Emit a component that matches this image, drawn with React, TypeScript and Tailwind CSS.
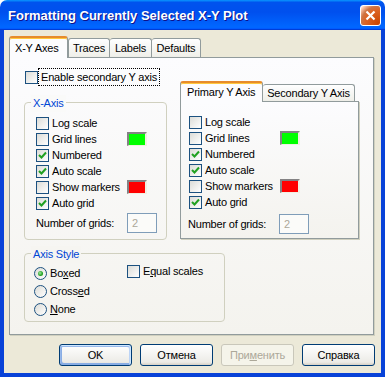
import type React from "react";

const CheckBox: React.FC<{ checked?: boolean }> = ({ checked }) => (
  <span className="flex h-[13px] w-[13px] shrink-0 items-center justify-center border border-[#1c5180] bg-[linear-gradient(135deg,#dcdcd7,#ffffff)]">
    {checked && (
      <svg width="9" height="9" viewBox="0 0 9 9">
        <polyline
          points="1,4 3.5,6.5 8,1.5"
          fill="none"
          stroke="#21a121"
          strokeWidth="2"
        />
      </svg>
    )}
  </span>
);

const Radio: React.FC<{ checked?: boolean }> = ({ checked }) => (
  <span className="flex h-[13px] w-[13px] shrink-0 items-center justify-center rounded-full border border-[#1c5180] bg-[linear-gradient(135deg,#dcdcd7,#ffffff)]">
    {checked && (
      <span className="h-[5px] w-[5px] rounded-full bg-[radial-gradient(circle_at_40%_40%,#a0e8a0,#21a121_60%,#1a8a1a)]" />
    )}
  </span>
);

const Swatch: React.FC<{ color: string }> = ({ color }) => (
  <span
    className={`h-[14px] w-[20px] border-t-2 border-l-2 border-b border-r-2 border-t-[#848284] border-l-[#848284] border-b-[#f1efe2] border-r-[#f1efe2] ${color}`}
  />
);

const OptionRow: React.FC<{
  label: string;
  checked?: boolean;
  swatch?: string;
}> = ({ label, checked, swatch }) => (
  <div className="flex h-[16px] items-center">
    <div className="flex w-[91px] items-center">
      <CheckBox checked={checked} />
      <span className="ml-[3px] whitespace-nowrap">{label}</span>
    </div>
    {swatch && <Swatch color={swatch} />}
  </div>
);

const AxisOptions: React.FC<{ gridsTop: string }> = ({ gridsTop }) => (
  <>
    <OptionRow label="Log scale" />
    <OptionRow label="Grid lines" swatch="bg-[#00ff00]" />
    <OptionRow label="Numbered" checked />
    <OptionRow label="Auto scale" checked />
    <OptionRow label="Show markers" swatch="bg-[#ff0000]" />
    <OptionRow label="Auto grid" checked />
    <div className={`flex items-center ${gridsTop}`}>
      <span className="w-[91px] whitespace-nowrap">Number of grids:</span>
      <div className="flex h-[20px] w-[30px] items-center border border-[#7f9db9] bg-[#fbfbf9] pl-[4px] text-[#aca899]">
        2
      </div>
    </div>
  </>
);

const Button: React.FC<{
  children: React.ReactNode;
  primary?: boolean;
  disabled?: boolean;
}> = ({ children, primary, disabled }) => (
  <button
    className={`flex h-[22px] w-[73px] items-center justify-center rounded-[3px] border ${
      disabled
        ? "border-[#c9c7ba] bg-[#f5f4ea] text-[#aca899]"
        : "border-[#003c74] bg-[linear-gradient(180deg,#ffffff,#ecebe6_86%,#d6d0c5)] text-black"
    } ${
      primary
        ? "shadow-[inset_-1px_1px_#cee7ff,inset_1px_2px_#98b8ea,inset_-2px_2px_#bcd4f6,inset_1px_-1px_#89ade4,inset_2px_-2px_#89ade4]"
        : ""
    }`}
  >
    {children}
  </button>
);

export default function App() {
  return (
    <div className="flex h-[377px] w-[385px] flex-col font-['Liberation_Sans',Arial,sans-serif] text-[11px] tracking-[-0.2px] text-black">
      {/* Title bar */}
      <div className="flex h-[30px] shrink-0 items-center justify-between rounded-t-[7px] bg-[linear-gradient(180deg,#0997ff,#0053ee_8%,#0050ee_40%,#0066ff_88%,#0066ff_93%,#005bff_95%,#003dd7_96%,#003dd7)] pl-[8px] pr-[4px]">
        <span className="pt-[2px] text-[13px] font-bold tracking-normal text-white [text-shadow:1px_1px_#0f1089]">
          Formatting Currently Selected X-Y Plot
        </span>
        <div className="mt-[1px] flex h-[21px] w-[21px] items-center justify-center rounded-[3px] border border-white bg-[radial-gradient(circle_at_90%_90%,#cc4600_0,#dc6527_55%,#cd7546_70%,#ffccb2_90%,#ffffff_100%)]">
          <svg width="11" height="11" viewBox="0 0 11 11">
            <path
              d="M1.5 1.5 L9.5 9.5 M9.5 1.5 L1.5 9.5"
              stroke="white"
              strokeWidth="2.2"
            />
          </svg>
        </div>
      </div>

      {/* Body */}
      <div className="flex flex-1 flex-col border-x-4 border-b-4 border-[#0842d8] bg-[#ece9d8]">
        {/* Main tabs */}
        <div className="flex h-[27px] items-end pl-[5px]">
          <div className="relative z-10 -mb-px flex h-[22px] w-[59px] items-center rounded-t-[3px] border-x border-t-2 border-x-[#919b9c] border-t-[#e68b2c] bg-[#fcfcfe] pl-[5px] shadow-[inset_0_1px_#ffc83c]">
            X-Y Axes
          </div>
          <div className="flex h-[19px] w-[42px] items-center justify-center rounded-t-[3px] border-x border-t border-[#919b9c] bg-[linear-gradient(180deg,#ffffff,#fafaf9_26%,#f0f0ea_95%,#ecebe5)]">
            Traces
          </div>
          <div className="flex h-[19px] w-[42px] items-center justify-center rounded-t-[3px] border-r border-t border-[#919b9c] bg-[linear-gradient(180deg,#ffffff,#fafaf9_26%,#f0f0ea_95%,#ecebe5)]">
            Labels
          </div>
          <div className="flex h-[19px] w-[49px] items-center justify-center rounded-t-[3px] border-r border-t border-[#919b9c] bg-[linear-gradient(180deg,#ffffff,#fafaf9_26%,#f0f0ea_95%,#ecebe5)]">
            Defaults
          </div>
        </div>

        {/* Main tab panel */}
        <div className="ml-[5px] mr-[7px] h-[278px] border border-[#919b9c] bg-[linear-gradient(180deg,#fcfcfe,#f4f3ee)] pl-[14px] shadow-[1px_1px_#d0d0bf]">
          <div className="flex items-start">
            {/* Left column */}
            <div className="flex w-[143px] flex-col">
              <div className="ml-[1px] mt-[11px] flex h-[16px] items-center">
                <CheckBox />
                <span className="ml-[1px] whitespace-nowrap px-[2px] outline-1 outline-dotted outline-black">
                  Enable secondary Y axis
                </span>
              </div>

              {/* X-Axis group */}
              <div className="relative mt-[17px] h-[138px] rounded-[4px] border border-[#d0d0bf] pl-[11px] pt-[12px]">
                <span className="absolute -top-[8px] left-[6px] bg-[#fafaf9] px-[2px] text-[#0046d5]">
                  X-Axis
                </span>
                <AxisOptions gridsTop="mt-[2px]" />
              </div>
            </div>

            {/* Right column: Y axis tabs */}
            <div className="ml-[13px] mt-[23px] flex w-[179px] flex-col">
              <div className="flex h-[20px] items-end">
                <div className="relative z-10 -mb-px flex h-[21px] w-[83px] items-center rounded-t-[3px] border-x border-t-2 border-x-[#919b9c] border-t-[#e68b2c] bg-[#fcfcfe] pl-[6px] shadow-[inset_0_1px_#ffc83c]">
                  Primary Y Axis
                </div>
                <div className="flex h-[17px] w-[92px] items-center justify-center rounded-t-[3px] border-r border-t border-[#919b9c] bg-[linear-gradient(180deg,#ffffff,#fafaf9_26%,#f0f0ea_95%,#ecebe5)]">
                  Secondary Y Axis
                </div>
              </div>
              <div className="h-[138px] border border-[#919b9c] bg-[linear-gradient(180deg,#fcfcfe,#f4f3ee)] pl-[8px] pt-[12px] shadow-[1px_1px_#d0d0bf]">
                <AxisOptions gridsTop="mt-[4px] -ml-px" />
              </div>
            </div>
          </div>

          {/* Axis Style group */}
          <div className="relative mt-[13px] flex h-[69px] w-[201px] rounded-[4px] border border-[#d0d0bf] pl-[9px] pt-[10px]">
            <span className="absolute -top-[8px] left-[6px] bg-[#f6f5f1] px-[2px] text-[#0046d5]">
              Axis Style
            </span>
            <div className="flex w-[93px] flex-col">
              <div className="flex h-[18px] items-center">
                <Radio checked />
                <span className="ml-[3px]">
                  Bo<span className="underline">x</span>ed
                </span>
              </div>
              <div className="flex h-[18px] items-center">
                <Radio />
                <span className="ml-[3px]">
                  Cross<span className="underline">e</span>d
                </span>
              </div>
              <div className="flex h-[18px] items-center">
                <Radio />
                <span className="ml-[3px]">
                  <span className="underline">N</span>one
                </span>
              </div>
            </div>
            <div className="-mt-[2px] flex h-[18px] items-center">
              <CheckBox />
              <span className="ml-[3px]">
                E<span className="underline">q</span>ual scales
              </span>
            </div>
          </div>
        </div>

        {/* Buttons */}
        <div className="mt-[9px] flex justify-end gap-[8px] pr-[6px]">
          <Button primary>OK</Button>
          <Button>Отмена</Button>
          <Button disabled>
            При<span className="underline">м</span>енить
          </Button>
          <Button>Справка</Button>
        </div>
      </div>
    </div>
  );
}
